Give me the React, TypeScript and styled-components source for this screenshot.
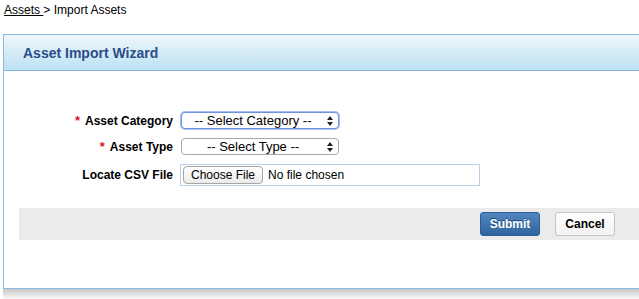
import React from 'react';
import styled, {createGlobalStyle} from 'styled-components';

const GlobalStyle = createGlobalStyle`
  html, body {
    margin: 0;
    padding: 0;
    overflow: hidden;
    background: #fff;
  }
  body {
    font-family: "Liberation Sans", Arial, sans-serif;
    font-size: 12px;
    color: #000;
  }
`

const Page = styled.div`
  width: 639px;
  height: 299px;
  overflow: hidden;
`

const Breadcrumb = styled.div`
  padding: 3px 0 0 4px;
  height: 34px;
  box-sizing: border-box;
  font-size: 12px;
  line-height: 14px;

  a {
    color: #000;
    text-decoration: underline;
  }
`

const PanelWrap = styled.div`
  margin-left: 3px;
  width: 680px;
`

const Panel = styled.section`
  border-top: 1px solid #86b9e6;
  border-left: 1px solid #86b9e6;
  border-bottom: 1px solid #86b9e6;
  background: #fff;
`

const PanelShadow = styled.div`
  height: 10px;
  background: linear-gradient(to bottom, #c6c6c6, #fafafa);
`

const Header = styled.header`
  height: 35px;
  display: flex;
  align-items: center;
  padding-left: 19px;
  background: linear-gradient(to bottom, #eff6fc, #bce2f2);
  border-bottom: 1px solid #86b9e6;
`

const Title = styled.h2`
  margin: 0;
  font-size: 14px;
  font-weight: bold;
  color: #2c4c8a;
  padding-top: 1px;
`

const Body = styled.div`
  height: 217px;
  padding-top: 41px;
  box-sizing: border-box;
`

const Form = styled.div`
  display: grid;
  grid-template-columns: 169px auto;
  column-gap: 8px;
  align-items: center;
  justify-content: start;
`

const Label = styled.label<{ $mt?: number }>`
  justify-self: end;
  margin-top: ${p => p.$mt ?? 0}px;
  font-weight: bold;
  font-size: 12px;
  line-height: 14px;
  white-space: nowrap;
`

const Star = styled.span`
  color: #e01010;
  margin-right: 5px;
  font-size: 13px;
`

const SelectWrap = styled.div<{ $mt?: number }>`
  position: relative;
  width: 158px;
  height: 17px;
  margin-top: ${p => p.$mt ?? 0}px;
`

const Select = styled.select<{ $focused?: boolean }>`
  appearance: none;
  -webkit-appearance: none;
  width: 100%;
  height: 100%;
  margin: 0;
  padding: 0 14px 0 0;
  box-sizing: border-box;
  border: 1px solid ${p => (p.$focused ? '#6f92e0' : '#a9a9a9')};
  box-shadow: ${p => (p.$focused ? '0 0 0 1px #a9bff0' : 'none')};
  border-radius: 4px;
  background: #fff;
  font-family: "Liberation Sans", Arial, sans-serif;
  font-size: 13px;
  line-height: 15px;
  color: #000;
  text-align: center;
  text-align-last: center;
  outline: none;
`

const Arrows = styled.svg`
  position: absolute;
  right: 6px;
  top: 4px;
  pointer-events: none;
`

const FileBox = styled.label`
  margin-top: 9px;
  margin-left: -1px;
  width: 300px;
  height: 22px;
  box-sizing: border-box;
  border: 1px solid #b9d0e6;
  display: flex;
  align-items: center;
  padding-left: 2px;
  gap: 5px;
  font-size: 12px;
  cursor: pointer;

  input {
    display: none;
  }
`

const ChooseButton = styled.span`
  height: 18px;
  box-sizing: border-box;
  padding: 0 7px;
  display: flex;
  align-items: center;
  border: 1px solid #a6a6a6;
  border-radius: 4px;
  background: linear-gradient(to bottom, #ffffff, #ebebeb);
  font-size: 12px;
`

const ButtonBar = styled.div`
  margin: 22px 0 0 15px;
  height: 32px;
  background: #ebebeb;
  display: flex;
  align-items: center;
  justify-content: flex-end;
  gap: 15px;
  padding-right: 68px;
`

const Button = styled.button<{ $primary?: boolean }>`
  width: 60px;
  height: 24px;
  margin: 0;
  padding: 0;
  border-radius: 3px;
  font-family: "Liberation Sans", Arial, sans-serif;
  font-size: 12px;
  font-weight: bold;
  cursor: pointer;
  border: 1px solid ${p => (p.$primary ? '#2d5e98' : '#c4c4c4')};
  color: ${p => (p.$primary ? '#fff' : '#000')};
  text-shadow: ${p => (p.$primary ? '0 -1px 0 #1d4475' : 'none')};
  background: ${p =>
    p.$primary
      ? 'linear-gradient(to bottom, #5286c0, #2f649f)'
      : 'linear-gradient(to bottom, #ffffff, #f2f2f2)'};
`

const UpDown = () => (
  <Arrows width="6" height="10" viewBox="0 0 6 10">
    <path d="M0 4 L3 0 L6 4 Z" fill="#222"/>
    <path d="M0 6 L3 10 L6 6 Z" fill="#222"/>
  </Arrows>
);

export default function App() {
  return (
    <Page>
      <GlobalStyle/>
      <Breadcrumb>
        <a href="#">Assets </a> &gt; Import Assets
      </Breadcrumb>
      <PanelWrap>
        <Panel>
          <Header>
            <Title>Asset Import Wizard</Title>
          </Header>
          <Body>
            <Form>
              <Label htmlFor="category"><Star>*</Star>Asset Category</Label>
              <SelectWrap>
                <Select id="category" $focused defaultValue="">
                  <option value="">-- Select Category --</option>
                </Select>
                <UpDown/>
              </SelectWrap>

              <Label htmlFor="type" $mt={9}><Star>*</Star>Asset Type</Label>
              <SelectWrap $mt={9}>
                <Select id="type" defaultValue="">
                  <option value="">-- Select Type --</option>
                </Select>
                <UpDown/>
              </SelectWrap>

              <Label htmlFor="csv" $mt={9}>Locate CSV File</Label>
              <FileBox htmlFor="csv">
                <input id="csv" type="file" accept=".csv"/>
                <ChooseButton>Choose File</ChooseButton>
                <span>No file chosen</span>
              </FileBox>
            </Form>
            <ButtonBar>
              <Button $primary>Submit</Button>
              <Button>Cancel</Button>
            </ButtonBar>
          </Body>
        </Panel>
        <PanelShadow/>
      </PanelWrap>
    </Page>
  );
}
